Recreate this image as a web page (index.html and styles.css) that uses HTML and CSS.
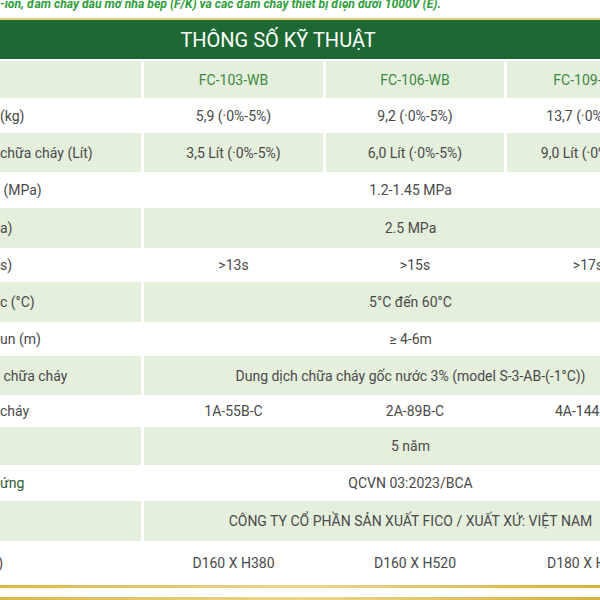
FILE: index.html
```html
<!DOCTYPE html>
<html lang="vi">
<head>
<meta charset="utf-8">
<link rel="stylesheet" href="styles.css">
</head>
<body>
<div class="page">
  <div class="intro"><p>-ion, đám cháy dầu mỡ nhà bếp (F/K) và các đám cháy thiết bị điện dưới 1000V (E).</p></div>
  <div class="title-bar"><h2>THÔNG SỐ KỸ THUẬT</h2></div>
  <div class="spec">
    <div class="row green head h37"><div class="c lbl"></div><div class="c">FC-103-WB</div><div class="c">FC-106-WB</div><div class="c">FC-109-WB</div></div>
    <div class="row h35"><div class="c lbl">(kg)</div><div class="c">5,9 (·0%-5%)</div><div class="c">9,2 (·0%-5%)</div><div class="c">13,7 (·0%-5%)</div></div>
    <div class="row green h39"><div class="c lbl">chữa cháy (Lít)</div><div class="c">3,5 Lít (·0%-5%)</div><div class="c">6,0 Lít (·0%-5%)</div><div class="c">9,0 Lít (·0%-5%)</div></div>
    <div class="row h36"><div class="c lbl">&nbsp;(MPa)</div><div class="c span">1.2-1.45 MPa</div></div>
    <div class="row green h40"><div class="c lbl">a)</div><div class="c span">2.5 MPa</div></div>
    <div class="row h34"><div class="c lbl">s)</div><div class="c">&gt;13s</div><div class="c">&gt;15s</div><div class="c">&gt;17s</div></div>
    <div class="row green h40"><div class="c lbl">c (°C)</div><div class="c span">5°C đến 60°C</div></div>
    <div class="row h34"><div class="c lbl">un (m)</div><div class="c span">≥ 4-6m</div></div>
    <div class="row green h39"><div class="c lbl">&nbsp;chữa cháy</div><div class="c span">Dung dịch chữa cháy gốc nước 3% (model S-3-AB-(-1°C))</div></div>
    <div class="row h32"><div class="c lbl">cháy</div><div class="c">1A-55B-C</div><div class="c">2A-89B-C</div><div class="c">4A-144B-C</div></div>
    <div class="row green h38"><div class="c lbl"></div><div class="c span">5 năm</div></div>
    <div class="row h36"><div class="c lbl link">ứng</div><div class="c span">QCVN 03:2023/BCA</div></div>
    <div class="row green h40"><div class="c lbl"></div><div class="c span">CÔNG TY CỔ PHẦN SẢN XUẤT FICO / XUẤT XỨ: VIỆT NAM</div></div>
    <div class="row h44"><div class="c lbl"><span class="cut">m)</span></div><div class="c">D160 X H380</div><div class="c">D160 X H520</div><div class="c">D180 X H650</div></div>
  </div>
  <div class="gold"></div>
  <div class="gold-gap"></div>
  <div class="gold"></div>
</div>
</body>
</html>
```
FILE: styles.css
```css
html, body {
  margin: 0;
  padding: 0;
  background: #ffffff;
  overflow: hidden;
}
.page {
  width: 600px;
  height: 600px;
  overflow: hidden;
  font-family: Roboto, "Noto Sans", sans-serif;
}
.intro {
  height: 18px;
  overflow: hidden;
}
.intro p {
  margin: -3px 0 0 0;
  font-size: 12.2px;
  line-height: 14px;
  font-weight: 700;
  font-style: italic;
  color: #2f9e3c;
  white-space: nowrap;
}
.title-bar {
  border-top: 2px solid #e3cc7c;
  background: #1e6833;
  height: 39px;
  display: flex;
  align-items: center;
  justify-content: center;
  padding-right: 44px;
}
.title-bar h2 {
  margin: 0;
  font-size: 20px;
  font-weight: 400;
  color: #ffffff;
}
.spec {
  margin-top: 2px;
  width: 669px;
  font-size: 14px;
  color: #4a4a4a;
}
.row {
  display: grid;
  grid-template-columns: 141px 179px 178px 162px;
  column-gap: 3px;
}
.c {
  display: flex;
  align-items: center;
  justify-content: center;
  white-space: nowrap;
  overflow: hidden;
}
.c.lbl {
  justify-content: flex-start;
}
.c.span {
  grid-column: 2 / 5;
  padding-left: 8px;
}
.green .c {
  background: #e4efdc;
}
.head .c {
  color: #3d8a43;
}
.link {
  color: #2f5a36;
}
.cut {
  margin-left: -14px;
}
.h32 { height: 32px; }
.h34 { height: 34px; }
.h35 { height: 35px; }
.h36 { height: 36px; }
.h37 { height: 37px; }
.h38 { height: 38px; }
.h39 { height: 39px; }
.h40 { height: 40px; }
.h44 { height: 44px; }
.gold {
  height: 3px;
  background: linear-gradient(90deg, #d8b84e, #ecd68a 50%, #d4b142);
}
.gold-gap {
  height: 9px;
}
```
